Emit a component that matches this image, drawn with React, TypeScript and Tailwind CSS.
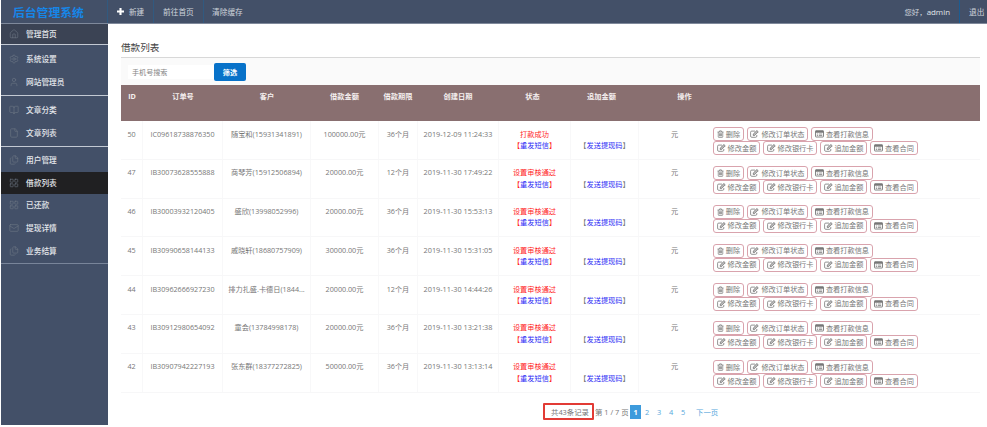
import React from 'react';
import { House, Settings, User, BookOpen, File, Files, LayoutGrid, Mail } from 'lucide-react';

type Row = [string, string, string, string, string, string, string];

const rows: Row[] = [
  ['50', 'IC09618738876350', '随宝和(15931341891)', '100000.00元', '36个月', '2019-12-09 11:24:33', '打款成功'],
  ['47', 'IB30073628555888', '商琴芳(15912506894)', '20000.00元', '12个月', '2019-11-30 17:49:22', '设置审核通过'],
  ['46', 'IB30003932120405', '盛欣(13998052996)', '20000.00元', '36个月', '2019-11-30 15:53:13', '设置审核通过'],
  ['45', 'IB30990658144133', '戚晓轩(18680757909)', '30000.00元', '36个月', '2019-11-30 15:31:05', '设置审核通过'],
  ['44', 'IB30962666927230', '排力扎盛.卡德日(1844...', '20000.00元', '12个月', '2019-11-30 14:44:26', '设置审核通过'],
  ['43', 'IB30912980654092', '童会(13784998178)', '20000.00元', '36个月', '2019-11-30 13:21:38', '设置审核通过'],
  ['42', 'IB30907942227193', '张东群(18377272825)', '50000.00元', '36个月', '2019-11-30 13:13:14', '设置审核通过'],
];

const menu = [
  { top: true, items: [{ icon: House, label: '管理首页' }] },
  { items: [{ icon: Settings, label: '系统设置' }, { icon: User, label: '网站管理员' }] },
  { items: [{ icon: BookOpen, label: '文章分类' }, { icon: File, label: '文章列表' }] },
  {
    items: [
      { icon: Files, label: '用户管理' },
      { icon: LayoutGrid, label: '借款列表', active: true },
      { icon: LayoutGrid, label: '已还款' },
      { icon: Mail, label: '提现详情' },
      { icon: Files, label: '业务结算' },
    ],
  },
] as { top?: boolean; items: { icon: React.ElementType; label: string; active?: boolean }[] }[];

function ActionIcon({ kind }: { kind: 'trash' | 'edit' | 'list' }) {
  if (kind === 'trash')
    return (
      <svg viewBox="0 0 14 16" className="h-[8px] w-[7px] shrink-0" fill="none" stroke="currentColor" strokeWidth="1.4">
        <path d="M1 4h12M4.5 4l.7-2.3h3.6L9.5 4M2.5 4v9.5q0 1.3 1.2 1.3h6.6q1.2 0 1.2-1.3V4M5 6.5v6M7 6.5v6M9 6.5v6" />
      </svg>
    );
  if (kind === 'edit')
    return (
      <svg viewBox="0 0 18 16" className="h-[8px] w-[9px] shrink-0" fill="none" stroke="currentColor" strokeWidth="1.6">
        <path d="M10 2.2H3.5Q1.2 2.2 1.2 4.5v7.8q0 2.3 2.3 2.3h7.8q2.3 0 2.3-2.3V10" />
        <path d="M6.5 8.2 13.8 1l2.7 2.7L9.2 11H6.5z" fill="currentColor" fillOpacity=".5" />
      </svg>
    );
  return (
    <svg viewBox="0 0 18 16" className="h-[8px] w-[9px] shrink-0" fill="none" stroke="currentColor" strokeWidth="1.8">
      <rect x="1" y="1.5" width="16" height="12.5" rx="1" />
      <path d="M1 3.5h16" strokeWidth="4" />
      <path d="M3.5 8h2.5M7.5 8h7M3.5 11h2.5M7.5 11h7" strokeWidth="1.5" />
    </svg>
  );
}

function Action({ kind, label, className }: { kind: 'trash' | 'edit' | 'list'; label: string; className: string }) {
  return (
    <button className={`flex h-[14px] items-center justify-center gap-[2px] rounded-[3px] border border-[#d9a3ad] whitespace-nowrap leading-none text-[#777] ${className}`}>
      <ActionIcon kind={kind} />
      <span>{label}</span>
    </button>
  );
}

const bodyCols = 'grid grid-cols-[22px_80px_88px_68px_39px_81px_72px_68px_71px_1fr]';
const cell = 'border-r border-[#f8f8f9] pt-[6.5px] text-center whitespace-nowrap';

export default function App() {
  return (
    <div className="h-[427px] w-[987px] overflow-hidden bg-white pl-px font-['Open_Sans','Noto_Sans_CJK_SC',sans-serif] text-[7.2px] leading-[12px] text-[#777]">
      <header className="flex h-[24px] items-center border-b border-[#7f899b] bg-[#435068] text-[#cfd4dc]">
        <div className="w-[106px] pl-[12px] text-[11.8px] font-bold text-[#1686e8]">后台管理系统</div>
        <div className="flex h-full w-[46px] items-center border-l border-[#315a80] pl-[9px]">
          <svg viewBox="0 0 8 8" className="mr-[5px] h-[7px] w-[7px]"><path d="M4 0v8M0 4h8" stroke="#fff" strokeWidth="2.4" /></svg>
          <span className="text-[7.6px]">新建</span>
        </div>
        <div className="flex h-full w-[50px] items-center border-l border-[#315a80] pl-[9px] text-[7.7px]">前往首页</div>
        <div className="flex h-full items-center border-l border-[#315a80] pl-[8px] text-[7.7px]">清除缓存</div>
        <div className="ml-auto flex h-full items-center pr-[9px] text-[7.4px]">您好，<span className="text-[7.9px] text-[#e0e4ea]">admin</span></div>
        <div className="flex h-full w-[28px] items-center border-l border-[#1c5c91] pl-[9px] text-[7.7px]">退出</div>
      </header>

      <div className="flex h-[401px]">
        <nav className="w-[107px] shrink-0 bg-[#435068] text-[7.7px] text-[#e3e6eb]">
          {menu.map((group, g) => (
            <div key={g} className={`border-b ${g === 3 ? 'border-[#79859a]' : 'border-[#c3c9d3]'} ${group.top ? 'h-[21px] bg-[#3b4354]' : g === 3 ? 'h-[117px] pt-[2px]' : 'h-[51px] pt-[3px]'}`}>
              {group.items.map(({ icon: Icon, label, active }, i) => (
                <div key={i} className={`flex items-center pl-[8px] ${group.top ? 'h-[20px]' : 'h-[22.6px]'} ${active ? 'bg-[#202022]' : ''}`}>
                  <Icon size={10} strokeWidth={1.4} className="mr-[7px] text-[#6e7887]" />
                  <span className="font-medium">{label}</span>
                </div>
              ))}
            </div>
          ))}
        </nav>

        <main className="w-[872px] pt-[16px] pl-[13px]">
          <h1 className="h-[18px] border-b border-[#d8d8d8] text-[9.6px] leading-[15px] text-[#444]">借款列表</h1>
          <div className="flex h-[27px] items-center bg-[#fafafa] pl-[7px]">
            <div className="flex h-[14px] w-[86px] items-center bg-white pl-[4px] text-[7.1px] text-[#858585]">手机号搜索</div>
            <button className="h-[18px] w-[32px] rounded-[2px] bg-[#0872c9] text-[7.2px] font-bold text-white">筛选</button>
          </div>
          <div className="grid h-[36px] grid-cols-[22px_80px_88px_67px_40px_80px_69px_69px_97px_1fr] bg-[#896f70] pt-[5px] text-center font-bold whitespace-nowrap text-[#f5efef]">
            {['ID', '订单号', '客户', '借款金额', '借款期限', '创建日期', '状态', '追加金额', '操作'].map((h) => (
              <div key={h}>{h}</div>
            ))}
          </div>
          {rows.map(([id, no, name, amount, term, date, status]) => (
            <div key={id} className={`${bodyCols} h-[38.8px] border-b border-[#f7f7f8] last-of-type:border-b-0`}>
              <div className={cell}>{id}</div>
              <div className={cell}>{no}</div>
              <div className={cell}>{name}</div>
              <div className={cell}>{amount}</div>
              <div className={cell}>{term}</div>
              <div className={`${cell} text-[7.3px]`}>{date}</div>
              <div className={`${cell} text-[#ff2525]`}>
                <div>{status}</div>
                <div className="-mt-[0.7px]">【<span className="text-[#2b2bf5]">重发短信</span>】</div>
              </div>
              <div className={cell}>
                <div className="mt-[11.3px]">【<span className="text-[#2b2bf5]">发送提现码</span>】</div>
              </div>
              <div className="pt-[6.5px] text-center">元</div>
              <div className="pt-[6.4px] pl-[3px]">
                <div className="flex gap-[3px]">
                  <Action kind="trash" label="删除" className="w-[31px]" />
                  <Action kind="edit" label="修改订单状态" className="w-[61px]" />
                  <Action kind="list" label="查看打款信息" className="w-[62px]" />
                </div>
                <div className="flex gap-[3px]">
                  <Action kind="edit" label="修改金额" className="w-[47px]" />
                  <Action kind="edit" label="修改银行卡" className="w-[54px]" />
                  <Action kind="edit" label="追加金额" className="w-[47px]" />
                  <Action kind="list" label="查看合同" className="w-[48px]" />
                </div>
              </div>
            </div>
          ))}
          <div className="mt-[10px] flex h-[18px] items-center pl-[422px] text-[7.4px] whitespace-nowrap">
            <span className="flex h-[17px] w-[51px] items-center justify-center rounded-[1px] border-2 border-[#e23b35] pl-[3px]">共43条记录</span>
            <span className="w-[36px] pl-px">第 1 / 7 页</span>
            <span className="flex h-[14px] w-[11px] items-center justify-center bg-[#3d9bdc] font-bold text-white">1</span>
            <span className="flex text-[#58a8dc]">
              {['2', '3', '4', '5'].map((p) => (
                <span key={p} className="w-[12px] text-center">{p}</span>
              ))}
            </span>
            <span className="pl-[7px] text-[#58a8dc]">下一页</span>
          </div>
        </main>
      </div>
    </div>
  );
}
